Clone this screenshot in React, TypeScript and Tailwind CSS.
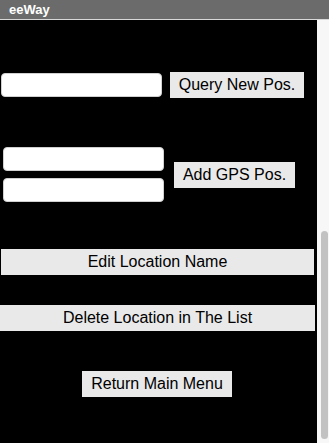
const font = { fontFamily: '"Liberation Sans", Arial, sans-serif' };

function Field({ className = "" }: { className?: string }) {
  return (
    <input
      type="text"
      className={`h-[24px] w-[161px] rounded-[4px] border border-[#d0d0d0] bg-white outline-none ${className}`}
    />
  );
}

function Btn({ label, className = "" }: { label: string; className?: string }) {
  return (
    <button
      className={`h-[26px] bg-[#e9e9e9] text-[16px] leading-none text-black ${className}`}
    >
      {label}
    </button>
  );
}

export default function App() {
  return (
    <div className="flex h-[443px] w-[329px] flex-col overflow-hidden bg-black" style={font}>
      <div className="flex h-[19px] items-center bg-[#6b6b6b] pl-[9px] text-[13px] font-bold text-white">
        eeWay
      </div>
      <div className="h-px bg-[#d8d8d8]" />
      <div className="flex flex-1">
        <div className="flex flex-1 flex-col">
          <div className="mt-[52px] flex items-center">
            <Field className="ml-px" />
            <Btn label="Query New Pos." className="ml-[8px] w-[134px]" />
          </div>

          <div className="mt-[49px] flex items-center">
            <div className="ml-[3px] flex flex-col gap-[7px]">
              <Field />
              <Field />
            </div>
            <Btn label="Add GPS Pos." className="ml-[10px] w-[121px]" />
          </div>

          <Btn label="Edit Location Name" className="ml-px mt-[47px] w-[313px]" />
          <Btn label="Delete Location in The List" className="mt-[30px] w-[315px]" />
          <Btn label="Return Main Menu" className="ml-[82px] mt-[40px] h-[25px] w-[150px]" />
        </div>
        <div className="flex w-[12px] flex-col bg-[#f7f7f7] pb-[4px] pt-[211px]">
          <div className="ml-[4px] w-[7px] flex-1 rounded-full bg-[#c2c2c2]" />
        </div>
      </div>
    </div>
  );
}
